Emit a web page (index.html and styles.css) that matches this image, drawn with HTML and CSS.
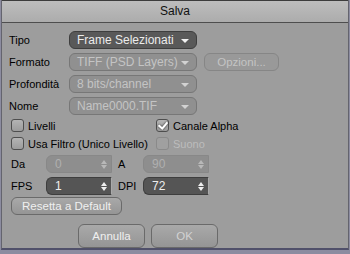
FILE: index.html
```html
<html>
<head>
    <meta charset="UTF-8"/>
    <title>Salva</title>
    <link rel="stylesheet" href="styles.css">
</head>
<body>
<div class="dialog">
    <div class="titlebar">Salva</div>
    <div class="content">

        <div class="row">
            <span class="label">Tipo</span>
            <div class="select">Frame Selezionati<span class="arrow"></span></div>
        </div>
        <div class="row">
            <span class="label">Formato</span>
            <div class="select off">TIFF (PSD Layers)<span class="arrow"></span></div>
            <div class="btn off opt">Opzioni...</div>
        </div>
        <div class="row">
            <span class="label">Profondità</span>
            <div class="select off">8 bits/channel<span class="arrow"></span></div>
        </div>
        <div class="row">
            <span class="label">Nome</span>
            <div class="select off">Name0000.TIF<span class="arrow"></span></div>
        </div>

        <div class="checks">
            <div class="check"><span class="box"></span>Livelli</div>
            <div class="check"><span class="box on"></span>Canale Alpha</div>
            <div class="check"><span class="box"></span>Usa Filtro (Unico Livello)</div>
            <div class="check off"><span class="box"></span>Suono</div>
        </div>

        <div class="row spinrow">
            <span class="slabel">Da</span>
            <div class="spin off">0<span class="step"></span></div>
            <span class="mlabel">A</span>
            <div class="spin off">90<span class="step"></span></div>
        </div>
        <div class="row spinrow">
            <span class="slabel">FPS</span>
            <div class="spin">1<span class="step"></span></div>
            <span class="mlabel">DPI</span>
            <div class="spin">72<span class="step"></span></div>
        </div>

        <div class="btn reset">Resetta a Default</div>

        <div class="actions">
            <div class="btn big">Annulla</div>
            <div class="btn big dim">OK</div>
        </div>
    </div>
</div>
</body>
</html>
```

FILE: styles.css
```css
body {
    margin: 0;
    width: 350px;
    height: 254px;
    background: #8c8ca0;
    font-family: "Liberation Sans", Arial, sans-serif;
    font-size: 11px;
    overflow: hidden;
}

.dialog {
    height: 250px;
    margin: 0 1px;
    border-left: 1px solid #64646e;
    border-right: 1px solid #64646e;
    border-bottom: 2px solid #50506a;
    background: #9d9d9d;
    box-sizing: border-box;
}

.titlebar {
    height: 23px;
    line-height: 21px;
    border-top: 1px solid #3c3c3c;
    border-bottom: 1px solid #4e4e4e;
    background: linear-gradient(#bdbdbd, #acacac);
    text-align: center;
    color: #111;
    font-size: 12px;
    box-sizing: border-box;
}

.content {
    padding: 8px 0 0 7px;
}

.row {
    display: flex;
    align-items: center;
    height: 18px;
    margin-bottom: 4px;
}

.label {
    width: 60px;
    color: #000;
}

.select {
    position: relative;
    width: 128px;
    height: 18px;
    line-height: 16px;
    box-sizing: border-box;
    padding-left: 7px;
    border: 1px solid #3e3e3e;
    border-radius: 6px;
    background: #595959;
    color: #ececec;
    font-size: 12px;
}

.select.off {
    background: #909090;
    border-color: #777;
    color: #c4c4c4;
}

.arrow {
    position: absolute;
    right: 7px;
    top: 7px;
    border-left: 4px solid transparent;
    border-right: 4px solid transparent;
    border-top: 4px solid #f2f2f2;
}

.off .arrow {
    border-top-color: #d2d2d2;
}

.btn {
    height: 18px;
    line-height: 16px;
    box-sizing: border-box;
    border: 1px solid #6a6a6a;
    border-radius: 6px;
    background: linear-gradient(#a9a9a9, #959595);
    color: #f0f0f0;
    text-align: center;
    font-size: 11.5px;
}

.btn.off {
    border-color: #868686;
    background: #999;
    color: #c4c4c4;
}

.opt {
    width: 75px;
    margin-left: 7px;
}

.checks {
    display: grid;
    grid-template-columns: 145px auto;
    row-gap: 5px;
    margin: 0 0 5px 2px;
}

.check {
    display: flex;
    align-items: center;
    height: 13px;
    color: #000;
}

.check.off {
    color: #bcbcbc;
}

.box {
    position: relative;
    width: 11px;
    height: 11px;
    margin-right: 4px;
    border: 1px solid #4e4e4e;
    border-radius: 3px;
    background: linear-gradient(#b4b4b4, #9c9c9c);
}

.off .box {
    border-color: #8a8a8a;
    background: #a0a0a0;
}

.box.on::after {
    content: "";
    position: absolute;
    left: 3px;
    top: 0px;
    width: 4px;
    height: 7px;
    border-right: 2px solid #fff;
    border-bottom: 2px solid #fff;
    transform: rotate(40deg);
    filter: drop-shadow(0 0 1px #222);
}

.spinrow {
    margin-left: 2px;
}

.slabel {
    width: 35px;
}

.mlabel {
    width: 31px;
    padding-left: 6px;
    box-sizing: border-box;
}

.spin {
    position: relative;
    width: 66px;
    height: 18px;
    line-height: 16px;
    box-sizing: border-box;
    padding-left: 8px;
    border: 1px solid #3e3e3e;
    border-right-color: #aaa;
    border-radius: 6px 0 0 6px;
    background: #555;
    color: #eee;
    font-size: 12px;
}

.spin.off {
    background: #8e8e8e;
    border-color: #888;
    color: #b0b0b0;
}

.step::before,
.step::after {
    content: "";
    position: absolute;
    right: 4px;
    border-left: 3px solid transparent;
    border-right: 3px solid transparent;
}

.step::before {
    top: 4px;
    border-bottom: 4px solid #eee;
}

.step::after {
    top: 9px;
    border-top: 4px solid #eee;
}

.off .step::before {
    border-bottom-color: #b8b8b8;
}

.off .step::after {
    border-top-color: #b8b8b8;
}

.reset {
    width: 111px;
    margin: -2px 0 0 2px;
}

.actions {
    display: flex;
    gap: 6px;
    margin: 9px 0 0 69px;
}

.big {
    width: 67px;
    height: 24px;
    line-height: 22px;
}

.dim {
    color: #d2d2d2;
}
```
